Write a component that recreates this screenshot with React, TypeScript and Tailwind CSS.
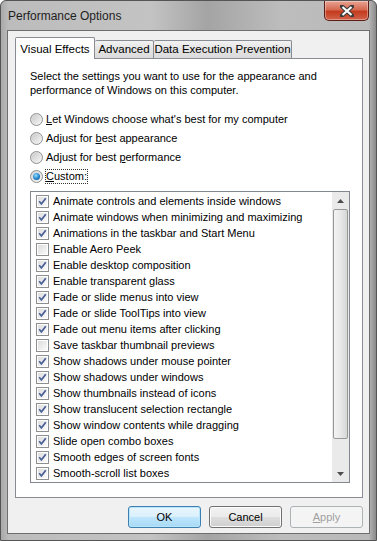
import React from 'react';

const effects: [string, boolean][] = [
  ['Animate controls and elements inside windows', true],
  ['Animate windows when minimizing and maximizing', true],
  ['Animations in the taskbar and Start Menu', true],
  ['Enable Aero Peek', false],
  ['Enable desktop composition', true],
  ['Enable transparent glass', true],
  ['Fade or slide menus into view', true],
  ['Fade or slide ToolTips into view', true],
  ['Fade out menu items after clicking', true],
  ['Save taskbar thumbnail previews', false],
  ['Show shadows under mouse pointer', true],
  ['Show shadows under windows', true],
  ['Show thumbnails instead of icons', true],
  ['Show translucent selection rectangle', true],
  ['Show window contents while dragging', true],
  ['Slide open combo boxes', true],
  ['Smooth edges of screen fonts', true],
  ['Smooth-scroll list boxes', true],
];

function Radio({ checked }: { checked?: boolean }) {
  return (
    <span className="flex h-[13px] w-[13px] shrink-0 items-center justify-center rounded-full border border-[#8e8f8f] bg-[linear-gradient(135deg,#d4d4d4,#f7f7f7)]">
      <span
        className={
          checked
            ? 'h-[7px] w-[7px] rounded-full bg-[radial-gradient(circle_at_40%_35%,#8fe0ff,#1f7bc4_60%,#0b4f8e)]'
            : 'h-[9px] w-[9px] rounded-full bg-[linear-gradient(135deg,#cbcbcb,#f4f4f4)]'
        }
      />
    </span>
  );
}

function Checkbox({ checked }: { checked: boolean }) {
  return (
    <span className="flex h-[13px] w-[13px] shrink-0 items-center justify-center border border-[#8e8f8f] bg-white">
      <span className="flex h-[9px] w-[9px] items-center justify-center bg-[linear-gradient(135deg,#dcdcdc,#fbfbfb)]">
        {checked && (
          <svg width="9" height="9" viewBox="0 0 9 9">
            <path d="M1.2 4.3 L3.4 6.8 L7.8 1.2" fill="none" stroke="#4a5f97" strokeWidth="1.7" />
          </svg>
        )}
      </span>
    </span>
  );
}

function RadioRow({ label, checked, focus }: { label: React.ReactNode; checked?: boolean; focus?: boolean }) {
  return (
    <div className="flex h-[19px] items-center gap-[3px]">
      <Radio checked={checked} />
      <span className={focus ? 'outline-1 outline-dotted outline-[#333] leading-[13px]' : ''}>{label}</span>
    </div>
  );
}

function Button({ children, primary, disabled }: { children: React.ReactNode; primary?: boolean; disabled?: boolean }) {
  return (
    <div
      className={`flex h-[22px] w-[73px] items-center justify-center rounded-[3px] border ${
        disabled
          ? 'border-[#adb2b5] bg-[#f4f4f4] text-[#a0a0a0]'
          : primary
          ? 'border-[#3c7fb1] bg-[linear-gradient(#eaf6fd_0%,#d9f0fc_50%,#bee6fd_51%,#a7d9f5_100%)] text-black shadow-[inset_0_0_0_1px_#b8e5fb]'
          : 'border-[#707070] bg-[linear-gradient(#f2f2f2_0%,#ebebeb_50%,#dddddd_51%,#cfcfcf_100%)] text-black shadow-[inset_0_0_0_1px_#fcfcfc]'
      }`}
    >
      {children}
    </div>
  );
}

export default function App() {
  return (
    <div
      className="flex h-[541px] w-[377px] flex-col overflow-hidden rounded-t-[6px] border border-[#555] bg-[linear-gradient(90deg,#a9a9a9_0%,#bcbcbc_2%,#c3c3c3_40%,#a4a4a4_55%,#bdbdbd_75%,#b9b9b9_98%,#8a8a8a_100%)] text-[11px] text-black"
      style={{ fontFamily: '"Liberation Sans", Arial, sans-serif' }}
    >
      {/* title bar */}
      <div className="flex h-[29px] shrink-0 items-start justify-between">
        <span className="mt-[6px] pl-[7px] text-[12px] text-[#1e1e1e]">Performance Options</span>
        <div className="mr-[7px] flex h-[20px] w-[45px] items-center justify-center rounded-b-[5px] border border-t-0 border-[#5b1d14] bg-[linear-gradient(#e8a493_0%,#d66a52_45%,#c43b1d_55%,#d2624a_100%)] shadow-[inset_0_0_0_1px_rgba(255,255,255,0.35)]">
          <svg width="14" height="12" viewBox="0 0 14 12">
            <path d="M2 1.5 L12 10.5 M12 1.5 L2 10.5" stroke="#3b3b3b" strokeWidth="4.2" strokeLinecap="square" />
            <path d="M2.5 2 L11.5 10 M11.5 2 L2.5 10" stroke="#ffffff" strokeWidth="2.2" />
          </svg>
        </div>
      </div>

      {/* client area */}
      <div className="mx-[6px] mb-[6px] flex flex-1 flex-col border border-[#6e6e6e] bg-[#f0f0f0] px-[7px] pt-[6px]">
        {/* tabs */}
        <div className="flex h-[21px] items-end whitespace-nowrap text-[11.5px]">
          <div className="relative z-10 -mb-px flex h-[22px] w-[80px] items-start justify-center rounded-t-[2px] border border-b-0 border-[#898c95] bg-white pt-[3px]">
            Visual Effects
          </div>
          <div className="flex h-[18px] w-[59px] items-center justify-center rounded-t-[2px] border border-l-0 border-b-0 border-[#898c95] bg-[linear-gradient(#f2f2f2,#e3e3e3_50%,#dbdbdb)]">
            Advanced
          </div>
          <div className="flex h-[18px] w-[138px] items-center justify-center rounded-t-[2px] border border-l-0 border-b-0 border-[#898c95] bg-[linear-gradient(#f2f2f2,#e3e3e3_50%,#dbdbdb)]">
            Data Execution Prevention
          </div>
        </div>

        {/* panel */}
        <div className="flex h-[440px] w-[348px] flex-col border border-[#898c95] bg-white pl-[14px] pt-[10px]">
          <p className="leading-[14px] whitespace-nowrap">
            Select the settings you want to use for the appearance and
            <br />
            performance of Windows on this computer.
          </p>
          <div className="mt-[13px] flex flex-col whitespace-nowrap">
            <RadioRow label={<><u>L</u>et Windows choose what's best for my computer</>} />
            <RadioRow label={<>Adjust for <u>b</u>est appearance</>} />
            <RadioRow label={<>Adjust for best <u>p</u>erformance</>} />
            <RadioRow label={<><u>C</u>ustom:</>} checked focus />
          </div>

          {/* list box */}
          <div className="mt-[5px] flex h-[292px] w-[320px] border border-[#828790] bg-white">
            <div className="flex flex-1 flex-col overflow-hidden pl-[5px] pt-px">
              {effects.map(([label, checked]) => (
                <div key={label} className="flex h-[16px] shrink-0 items-center gap-[4px] whitespace-nowrap">
                  <Checkbox checked={checked} />
                  <span>{label}</span>
                </div>
              ))}
            </div>
            {/* scrollbar */}
            <div className="flex w-[17px] shrink-0 flex-col bg-[#eaeaea]">
              <div className="flex h-[17px] items-center justify-center">
                <svg width="7" height="4" viewBox="0 0 7 4">
                  <path d="M0 4 L3.5 0 L7 4 Z" fill="#4d4d4d" />
                </svg>
              </div>
              <div className="mx-px h-[230px] rounded-[2px] border border-[#979797] bg-[linear-gradient(90deg,#f3f3f3,#e8e8e8_50%,#d6d6d6)]" />
              <div className="flex-1" />
              <div className="flex h-[17px] items-center justify-center">
                <svg width="7" height="4" viewBox="0 0 7 4">
                  <path d="M0 0 L3.5 4 L7 0 Z" fill="#4d4d4d" />
                </svg>
              </div>
            </div>
          </div>
        </div>

        {/* buttons */}
        <div className="mt-[8px] flex w-[348px] justify-end gap-[8px]">
          <Button primary>OK</Button>
          <Button>Cancel</Button>
          <Button disabled>
            <span>
              <u>A</u>pply
            </span>
          </Button>
        </div>
      </div>
    </div>
  );
}
